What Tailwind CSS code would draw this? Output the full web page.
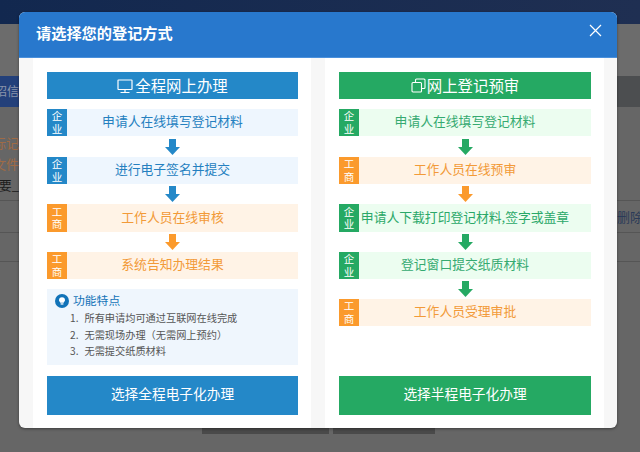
<!DOCTYPE html>
<html lang="zh">
<head>
<meta charset="utf-8">
<script src="https://cdn.jsdelivr.net/npm/@tailwindcss/browser@4"></script>
</head>
<body class="relative w-[640px] h-[452px] overflow-hidden bg-[#666666] font-['Noto_Sans_CJK_SC','Noto_Sans',sans-serif]">
<!-- page behind the overlay -->
<div class="h-[452px] flex flex-col">
  <div class="h-[24px] bg-gradient-to-r from-[#12284f] to-[#1f2f52]"></div>
  <div class="h-[52px] bg-[#6c6c6c]"></div>
  <div class="h-[31px] bg-[#4c4e50]"><div class="w-[19px] h-[31px] overflow-hidden bg-[#23407a] text-[12px] leading-[29px] text-[#8a94aa] flex justify-end"><span class="whitespace-nowrap">招信</span></div></div>
  <div class="h-[25px]"></div>
  <div class="text-[13px] leading-[21px] text-[#a06b45] w-[19px] h-[21px] overflow-hidden flex justify-end"><span class="whitespace-nowrap">标记</span></div>
  <div class="text-[13px] leading-[21px] text-[#a06b45] w-[19px] h-[21px] overflow-hidden flex justify-end"><span class="whitespace-nowrap">文件</span></div>
  <div class="text-[13px] leading-[22px] text-[#1c1c1c] w-[19px] h-[22px] overflow-hidden flex justify-end"><span class="whitespace-nowrap">要_</span></div>
  <div class="mt-[4px] border-t border-[#555555] h-[32px] flex justify-end items-center"><span class="text-[13px] text-[#2a3a58] w-[23px] overflow-hidden whitespace-nowrap">删除</span></div>
  <div class="border-t border-[#555555] h-[29px]"></div>
  <div class="border-t border-[#555555]"></div>
</div>
<div class="absolute left-[202px] top-[428px] w-[233px] h-[6px] flex gap-[4px]"><div class="w-[127px] bg-[#4a4a4a]"></div><div class="flex-1 bg-[#4a4a4a]"></div></div>

<!-- dialog -->
<div class="absolute left-[19px] top-[12px] w-[598px] h-[416px] rounded-[6px] overflow-hidden bg-[#f7f7f7] flex flex-col shadow-[0_1px_3px_rgba(0,0,0,0.4)]">
  <div class="h-[46px] shrink-0 bg-[#2878cd] border-b border-[#4a90dc] flex items-center justify-between pl-[17px] pr-[15px]">
    <span class="text-[15.2px] font-bold text-white mb-[5px]">请选择您的登记方式</span>
    <svg class="w-[13px] h-[13px] mb-[9px]" viewBox="0 0 13 13" fill="none" stroke="#fff" stroke-width="1.2"><path d="M1 1l11 11M12 1L1 12"/></svg>
  </div>
  <div class="flex-1 flex pl-[14px] gap-[14px]">
    <!-- left -->
    <div class="w-[278px] bg-white pl-[14px] pr-[13px] pt-[14px] flex flex-col">
      <div class="h-[27px] bg-[#2488c8] text-white text-[15.4px] flex items-center justify-center gap-[2px]">
        <svg class="w-[16px] h-[16px]" viewBox="0 0 16 16" fill="none" stroke="#fff" stroke-width="1.2"><rect x="1" y="2" width="14" height="9.5" rx="0.5"/><path d="M8 11.5v2.500M3.500 14.500h9"/></svg>
        <span>全程网上办理</span>
      </div>
      <div class="mt-[10px] h-[27px] bg-[#eef6fe] flex">
        <div class="w-[20px] bg-[#2488c8] text-white text-[10.5px] leading-[12.5px] text-center px-[4.500px] flex items-center"><span>企业</span></div>
        <div class="flex-1 text-center text-[12.8px] leading-[24px] text-[#2480c0] pr-[20px]">申请人在线填写登记材料</div>
      </div>
      <div class="h-[21px] flex items-center justify-center"><svg class="w-[15px] h-[16px]" viewBox="0 0 15 16" fill="#2488c8"><path d="M4 0h7v8h4l-7.500 8L0 8h4z"/></svg></div>
      <div class="h-[27px] bg-[#eef6fe] flex">
        <div class="w-[20px] bg-[#2488c8] text-white text-[10.5px] leading-[12.5px] text-center px-[4.500px] flex items-center"><span>企业</span></div>
        <div class="flex-1 text-center text-[12.8px] leading-[24px] text-[#2480c0] pr-[20px]">进行电子签名并提交</div>
      </div>
      <div class="h-[20px] flex items-center justify-center"><svg class="w-[15px] h-[16px]" viewBox="0 0 15 16" fill="#2488c8"><path d="M4 0h7v8h4l-7.500 8L0 8h4z"/></svg></div>
      <div class="h-[28px] bg-[#fff3e6] flex">
        <div class="w-[20px] bg-[#fb9a2c] text-white text-[10.5px] leading-[12.5px] text-center px-[4.500px] flex items-center"><span>工商</span></div>
        <div class="flex-1 text-center text-[12.8px] leading-[25px] text-[#f29a38] pr-[20px]">工作人员在线审核</div>
      </div>
      <div class="h-[20px] flex items-center justify-center"><svg class="w-[15px] h-[16px]" viewBox="0 0 15 16" fill="#fb9a2c"><path d="M4 0h7v8h4l-7.500 8L0 8h4z"/></svg></div>
      <div class="h-[27px] bg-[#fff3e6] flex">
        <div class="w-[20px] bg-[#fb9a2c] text-white text-[10.5px] leading-[12.5px] text-center px-[4.500px] flex items-center"><span>工商</span></div>
        <div class="flex-1 text-center text-[12.8px] leading-[24px] text-[#f29a38] pr-[20px]">系统告知办理结果</div>
      </div>
      <div class="mt-[10px] h-[76px] bg-[#eff6fd] pl-[8px] pt-[2px]">
        <div class="flex items-center gap-[4px] h-[18px]">
          <svg class="w-[14px] h-[14px] mt-[2px]" viewBox="0 0 14 14"><circle cx="7" cy="7" r="7" fill="#1273b8"/><path d="M4 6.200a3 3 0 0 1 6 0c0 1.200-1.100 1.600-1.300 2.600H5.300C5.100 7.800 4 7.400 4 6.200z" fill="#fff"/><rect x="5.600" y="9.300" width="2.800" height="1.300" fill="#fff"/></svg>
          <span class="text-[11.8px] text-[#1273b8]">功能特点</span>
        </div>
        <ol class="pl-[15px] text-[10.2px] leading-[16.5px] text-[#555555] mt-[1px]">
          <li class="flex gap-[6px]"><span>1.</span><span>所有申请均可通过互联网在线完成</span></li>
          <li class="flex gap-[6px]"><span>2.</span><span>无需现场办理（无需网上预约）</span></li>
          <li class="flex gap-[6px]"><span>3.</span><span>无需提交纸质材料</span></li>
        </ol>
      </div>
      <div class="mt-[11px] h-[39px] bg-[#2488c8] text-white text-[13.7px] leading-[35px] text-center">选择全程电子化办理</div>
    </div>
    <!-- right -->
    <div class="w-[279px] bg-white pl-[14px] pr-[13px] pt-[14px] flex flex-col">
      <div class="h-[27px] bg-[#25a963] text-white text-[15.4px] flex items-center justify-center gap-[1px]">
        <svg class="w-[15px] h-[15px]" viewBox="0 0 15 15" fill="none" stroke="#fff" stroke-width="1.1"><rect x="1" y="4.500" width="9.500" height="9.500" rx="1"/><path d="M4.500 4.500V2a1 1 0 0 1 1-1H13a1 1 0 0 1 1 1v7.500a1 1 0 0 1-1 1h-2.500"/></svg>
        <span>网上登记预审</span>
      </div>
      <div class="mt-[10px] h-[27px] bg-[#ecfdf0] flex">
        <div class="w-[20px] bg-[#25a963] text-white text-[10.5px] leading-[12.5px] text-center px-[4.500px] flex items-center"><span>企业</span></div>
        <div class="flex-1 text-center text-[12.8px] leading-[24px] text-[#35aa70] pr-[20px]">申请人在线填写登记材料</div>
      </div>
      <div class="h-[21px] flex items-center justify-center"><svg class="w-[15px] h-[16px]" viewBox="0 0 15 16" fill="#25a963"><path d="M4 0h7v8h4l-7.500 8L0 8h4z"/></svg></div>
      <div class="h-[27px] bg-[#fff3e6] flex">
        <div class="w-[20px] bg-[#fb9a2c] text-white text-[10.5px] leading-[12.5px] text-center px-[4.500px] flex items-center"><span>工商</span></div>
        <div class="flex-1 text-center text-[12.8px] leading-[24px] text-[#f29a38] pr-[20px]">工作人员在线预审</div>
      </div>
      <div class="h-[20px] flex items-center justify-center"><svg class="w-[15px] h-[16px]" viewBox="0 0 15 16" fill="#fb9a2c"><path d="M4 0h7v8h4l-7.500 8L0 8h4z"/></svg></div>
      <div class="h-[28px] bg-[#ecfdf0] flex">
        <div class="w-[20px] bg-[#25a963] text-white text-[10.5px] leading-[12.5px] text-center px-[4.500px] flex items-center"><span>企业</span></div>
        <div class="flex-1 text-center text-[12.8px] leading-[25px] text-[#2aa868] whitespace-nowrap pr-[20px]">申请人下载打印登记材料,签字或盖章</div>
      </div>
      <div class="h-[20px] flex items-center justify-center"><svg class="w-[15px] h-[16px]" viewBox="0 0 15 16" fill="#25a963"><path d="M4 0h7v8h4l-7.500 8L0 8h4z"/></svg></div>
      <div class="h-[27px] bg-[#ecfdf0] flex">
        <div class="w-[20px] bg-[#25a963] text-white text-[10.5px] leading-[12.5px] text-center px-[4.500px] flex items-center"><span>企业</span></div>
        <div class="flex-1 text-center text-[12.8px] leading-[24px] text-[#35aa70] pr-[20px]">登记窗口提交纸质材料</div>
      </div>
      <div class="h-[20px] flex items-center justify-center"><svg class="w-[15px] h-[16px]" viewBox="0 0 15 16" fill="#25a963"><path d="M4 0h7v8h4l-7.500 8L0 8h4z"/></svg></div>
      <div class="h-[27px] bg-[#fff3e6] flex">
        <div class="w-[20px] bg-[#fb9a2c] text-white text-[10.5px] leading-[12.5px] text-center px-[4.500px] flex items-center"><span>工商</span></div>
        <div class="flex-1 text-center text-[12.8px] leading-[24px] text-[#f29a38] pr-[20px]">工作人员受理审批</div>
      </div>
      <div class="mt-auto mb-[13px] h-[39px] bg-[#25a963] text-white text-[13.7px] leading-[35px] text-center">选择半程电子化办理</div>
    </div>
  </div>
</div>
</body>
</html>
